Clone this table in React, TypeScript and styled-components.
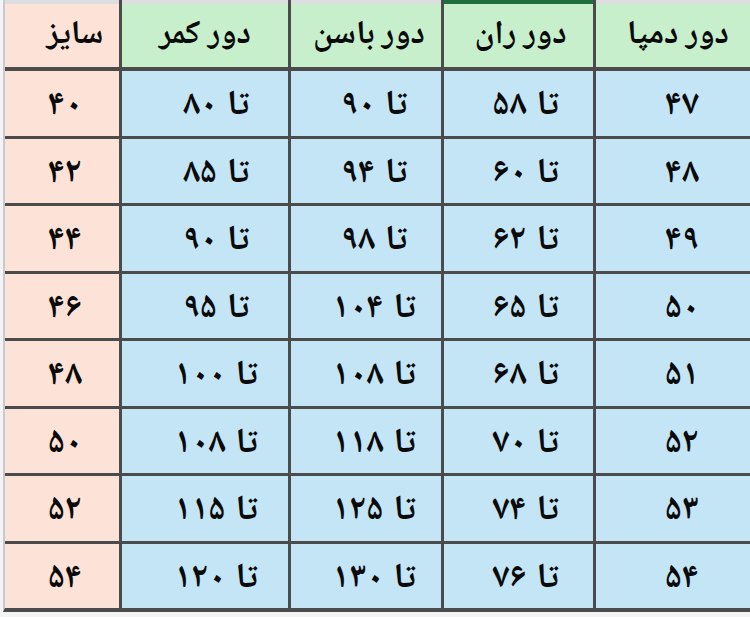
import React from "react";
import styled, { createGlobalStyle } from "styled-components";

const GlobalStyle = createGlobalStyle`
  html, body {
    margin: 0;
    padding: 0;
    background: #ffffff;
  }
  body {
    font-family: "Noto Naskh Arabic", "Noto Sans Arabic", "DejaVu Sans", sans-serif;
  }
`;

const Sheet = styled.div`
  width: 750px;
  height: 617px;
  overflow: hidden;
  background: #f4f4f4;
`;

const Grid = styled.div`
  display: grid;
  grid-template-columns: 114px 166px 150px 149px 1fr;
  column-gap: 3px;
  row-gap: 3px;
  margin-left: 3px;
  border-left: 2px solid #c9c9d0;
  background: #4b4b4b;
  border-bottom: 4px solid #4b4b4b;
`;

const HeadCell = styled.div<{ $bg: string; $shift: number; $top?: string }>`
  height: 63px;
  border-top: 4px solid ${(p) => p.$top || "#dcdedf"};
  margin-bottom: 1px;
  background: ${(p) => p.$bg};
  display: flex;
  align-items: center;
  justify-content: center;
  padding-left: ${(p) => p.$shift}px;
  direction: rtl;
  font-size: 33px;
  font-weight: 700;
  color: #0a0a0a;
`;

const Cell = styled.div<{ $bg: string; $shift: number }>`
  box-sizing: border-box;
  height: 64.5px;
  padding-top: 7px;
  background: ${(p) => p.$bg};
  display: flex;
  align-items: center;
  justify-content: center;
  padding-left: ${(p) => p.$shift}px;
  direction: rtl;
  font-size: 35px;
  font-weight: 700;
  color: #0a0a0a;
  gap: 10px;
`;

const Num = styled.span`
  letter-spacing: 6px;
  direction: rtl;
`;

const PEACH = "#fde3d7";
const GREEN = "#c8efcc";
const BLUE = "#c3e5f6";

const headers = [
  { label: "سایز", bg: PEACH, shift: 26 },
  { label: "دور کمر", bg: GREEN, shift: 0 },
  { label: "دور باسن", bg: GREEN, shift: 6 },
  { label: "دور ران", bg: GREEN, shift: 4, top: "#1f6e3e" },
  { label: "دور دمپا", bg: GREEN, shift: 10 },
];

const bodyShift = [6, 22, 16, 14, 18];

const rows = [
  ["۴۰", "۸۰", "۹۰", "۵۸", "۴۷"],
  ["۴۲", "۸۵", "۹۴", "۶۰", "۴۸"],
  ["۴۴", "۹۰", "۹۸", "۶۲", "۴۹"],
  ["۴۶", "۹۵", "۱۰۴", "۶۵", "۵۰"],
  ["۴۸", "۱۰۰", "۱۰۸", "۶۸", "۵۱"],
  ["۵۰", "۱۰۸", "۱۱۸", "۷۰", "۵۲"],
  ["۵۲", "۱۱۵", "۱۲۵", "۷۴", "۵۳"],
  ["۵۴", "۱۲۰", "۱۳۰", "۷۶", "۵۴"],
];

export default function App() {
  return (
    <>
      <GlobalStyle />
      <Sheet>
        <Grid>
          {headers.map((h) => (
            <HeadCell key={h.label} $bg={h.bg} $shift={h.shift} $top={h.top}>
              {h.label}
            </HeadCell>
          ))}
          {rows.map((r, i) =>
            r.map((v, j) => {
              const bg = j === 0 ? PEACH : BLUE;
              const ranged = j >= 1 && j <= 3;
              return (
                <Cell key={`${i}-${j}`} $bg={bg} $shift={bodyShift[j]}>
                  {ranged && <span>تا</span>}
                  <Num>{v}</Num>
                </Cell>
              );
            })
          )}
        </Grid>
      </Sheet>
    </>
  );
}
